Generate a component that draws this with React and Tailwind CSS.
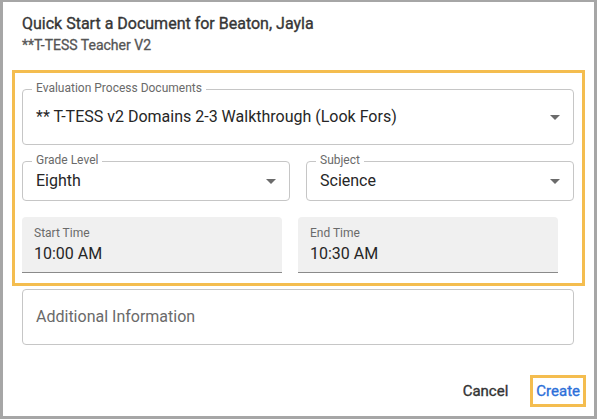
import React from "react";

function Arrow() {
  return (
    <svg width="24" height="24" viewBox="0 0 24 24" className="shrink-0">
      <path d="M7 10l5 5 5-5z" fill="#6b6b6b" />
    </svg>
  );
}

function Outlined({ label, value, height, className = "" }) {
  return (
    <div
      className={`relative flex items-center justify-between border border-[#c6c6c6] rounded-[4px] pl-[13px] pr-[6px] ${height} ${className}`}
    >
      <span className="absolute left-[9px] top-[-9px] bg-white px-[4px] text-[12px] leading-[14px] text-[#6a6a6a]">
        {label}
      </span>
      <span className="text-[16px] leading-[20px] text-[#262626] whitespace-nowrap">{value}</span>
      <Arrow />
    </div>
  );
}

function Filled({ label, value }) {
  return (
    <div className="w-[260px] h-[56px] bg-[#f0f0f0] rounded-t-[4px] border-b border-[#8a8a8a] pl-[12px] pt-[9px]">
      <div className="text-[12px] leading-[14px] text-[#6a6a6a]">{label}</div>
      <div className="mt-[4px] text-[16px] leading-[20px] text-[#262626]">{value}</div>
    </div>
  );
}

export default function App() {
  return (
    <div className="w-[597px] h-[419px] bg-white border-solid border-[#a6a6a6] border-x-[3px] border-t-2 border-b-[3px] flex flex-col font-['Roboto','Liberation_Sans',sans-serif]">
      <div className="pl-[19px] pt-[12px]">
        <div className="text-[16px] leading-[20px] font-normal text-[#363636] [-webkit-text-stroke:0.35px_#363636]">
          Quick Start a Document for Beaton, Jayla
        </div>
        <div className="mt-[1px] text-[14px] leading-[20px] font-normal text-[#555555] [-webkit-text-stroke:0.3px_#555555]">
          **T-TESS Teacher V2
        </div>
      </div>

      <div className="mt-[15px] mx-[9px] border-[3px] border-[#f4bd4f] pt-[16px] pb-[10px] pl-[7px] pr-[8px]">
        <Outlined
          label="Evaluation Process Documents"
          value="** T-TESS v2 Domains 2-3 Walkthrough (Look Fors)"
          height="h-[56px]"
        />
        <div className="grid grid-cols-2 gap-4 mt-4">
          <Outlined label="Grade Level" value="Eighth" height="h-[40px]" />
          <Outlined label="Subject" value="Science" height="h-[40px]" />
        </div>
        <div className="flex gap-4 mt-4">
          <Filled label="Start Time" value="10:00 AM" />
          <Filled label="End Time" value="10:30 AM" />
        </div>
      </div>

      <div className="mt-[3px] ml-[19px] w-[552px] h-[56px] border border-[#c6c6c6] rounded-[4px] pl-[13px] flex items-center">
        <span className="text-[16px] leading-[20px] text-[#6a6a6a]">Additional Information</span>
      </div>

      <div className="mt-[30px] flex justify-end items-center pr-[8px]">
        <span className="mr-[22px] text-[15px] leading-[20px] font-normal text-[#333333] [-webkit-text-stroke:0.35px_#333333]">
          Cancel
        </span>
        <div className="h-[32px] border-[3px] border-[#f4bd4f] px-[3px] flex items-center">
          <span className="text-[15px] leading-[20px] font-normal text-[#2c6fd9] [-webkit-text-stroke:0.35px_#2c6fd9]">
            Create
          </span>
        </div>
      </div>
    </div>
  );
}
